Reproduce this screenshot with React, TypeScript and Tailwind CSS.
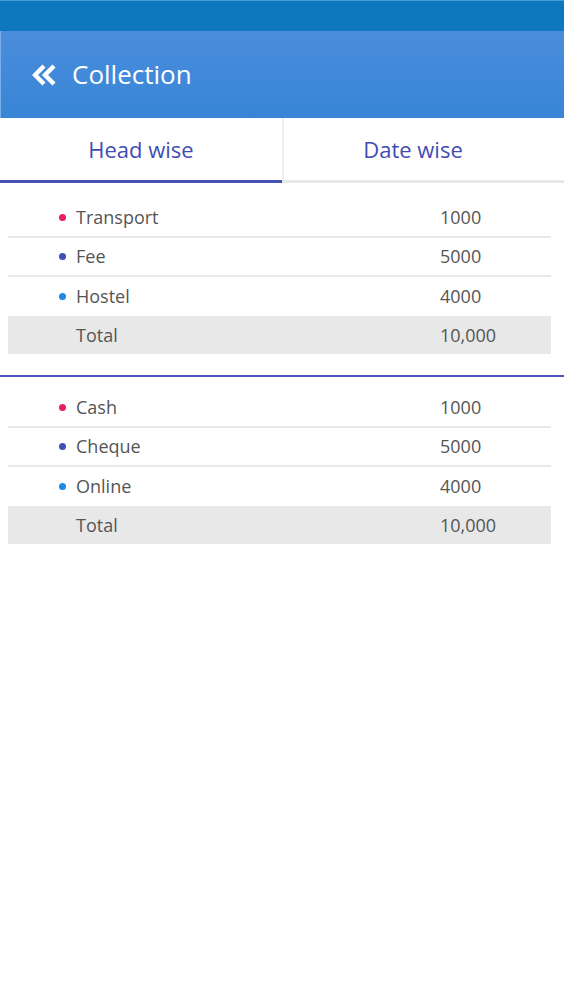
import React from "react";

type Row = { label: string; value: string; color: string };

const headRows: Row[] = [
  { label: "Transport", value: "1000", color: "bg-[#e91e63]" },
  { label: "Fee", value: "5000", color: "bg-[#3f51b5]" },
  { label: "Hostel", value: "4000", color: "bg-[#1e88e5]" },
];
const modeRows: Row[] = [
  { label: "Cash", value: "1000", color: "bg-[#e91e63]" },
  { label: "Cheque", value: "5000", color: "bg-[#3f51b5]" },
  { label: "Online", value: "4000", color: "bg-[#1e88e5]" },
];

function Section({ rows }: { rows: Row[] }) {
  return (
    <div className="ml-2 mr-[13px]">
      {rows.map((r, i) => (
        <div
          key={r.label}
          className={`flex items-center h-[39px] ${i < rows.length - 1 ? "border-b-2 border-[#e8e8e8]" : ""}`}
        >
          <div className="w-[68px] flex justify-end pr-[10px]">
            <span className={`w-[7px] h-[7px] rounded-full ${r.color}`} />
          </div>
          <span className="flex-1">{r.label}</span>
          <span className="w-[111px]">{r.value}</span>
        </div>
      ))}
      <div className="flex items-center h-[38px] bg-[#e8e8e8]">
        <div className="w-[68px]" />
        <span className="flex-1">Total</span>
        <span className="w-[111px]">10,000</span>
      </div>
    </div>
  );
}

export default function App() {
  return (
    <div
      className="w-[564px] h-[1004px] bg-white text-[18px] text-[#555555]"
      style={{ fontFamily: '"Open Sans", "Noto Sans", sans-serif' }}
    >
      <div className="h-[31px] bg-[#0e78bf] border-t border-[#4a9ad6]" />
      <div className="h-[87px] bg-gradient-to-b from-[#4b8ddd] to-[#3885d5] border-l border-[#7aaee6] flex items-center pl-[31px] gap-[14px]">
        <svg width="26" height="24" viewBox="0 0 26 24" fill="none">
          <path d="M12 3 L3 12 L12 21" stroke="white" strokeWidth="4.4" strokeLinejoin="miter" />
          <path d="M22 3 L13 12 L22 21" stroke="white" strokeWidth="4.4" strokeLinejoin="miter" />
        </svg>
        <span className="text-white text-[26px] leading-none pb-[1px]">Collection</span>
      </div>
      <div className="flex h-[65px] text-[#3f4db3] text-[22px]">
        <div className="w-[282px] flex items-center justify-center border-b-[3px] border-[#4350b5]">
          Head wise
        </div>
        <div className="flex-1 flex flex-col border-b-[3px] border-[#e8e8e8]">
          <div className="flex-1 flex items-center justify-center pr-[22px] border-l-2 border-[#eeeeee]">
            Date wise
          </div>
        </div>
      </div>
      <div className="pt-[16px]">
        <Section rows={headRows} />
      </div>
      <div className="mt-[21px] h-[2px] bg-[#4a56b8]" />
      <div className="pt-[12px]">
        <Section rows={modeRows} />
      </div>
    </div>
  );
}
